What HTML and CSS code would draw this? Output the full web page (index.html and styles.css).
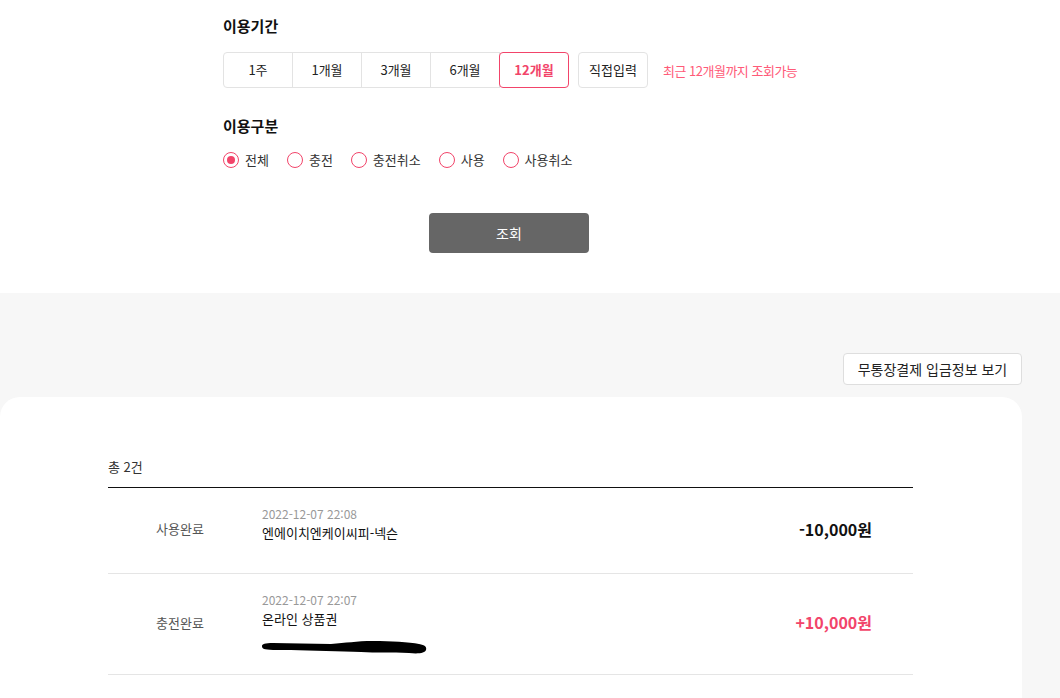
FILE: index.html
```html
<!DOCTYPE html>
<html lang="ko">
<head>
<meta charset="utf-8">
<title>이용내역</title>
<link rel="stylesheet" href="styles.css">
</head>
<body>
<section class="filter">
  <div class="filter-inner">
    <h3 class="label">이용기간</h3>
    <div class="period-row">
      <div class="seg">
        <button class="seg-btn">1주</button>
        <button class="seg-btn">1개월</button>
        <button class="seg-btn">3개월</button>
        <button class="seg-btn">6개월</button>
        <button class="seg-btn active">12개월</button>
      </div>
      <button class="seg-btn custom">직접입력</button>
      <span class="hint">최근 12개월까지 조회가능</span>
    </div>
    <h3 class="label label-2">이용구분</h3>
    <div class="radios">
      <label class="radio checked"><span class="circle"></span>전체</label>
      <label class="radio"><span class="circle"></span>충전</label>
      <label class="radio"><span class="circle"></span>충전취소</label>
      <label class="radio"><span class="circle"></span>사용</label>
      <label class="radio"><span class="circle"></span>사용취소</label>
    </div>
    <div class="search-wrap"><button class="search-btn">조회</button></div>
  </div>
</section>
<section class="results">
  <div class="results-top"><button class="deposit-btn">무통장결제 입금정보 보기</button></div>
  <div class="card">
    <p class="total">총 2건</p>
    <ul class="list">
      <li class="row">
        <div class="status">사용완료</div>
        <div class="info">
          <div class="date">2022-12-07 22:08</div>
          <div class="title">엔에이치엔케이씨피-넥슨</div>
        </div>
        <div class="amount">-10,000원</div>
      </li>
      <li class="row row-2">
        <div class="status">충전완료</div>
        <div class="info">
          <div class="date">2022-12-07 22:07</div>
          <div class="title">온라인 상품권</div>
          <svg class="redact" width="166" height="13" viewBox="0 0 166 13"><path d="M1 5 C1 3 4 2 12 2 C30 2 50 3 70 3 C85 2 95 0 112 0 C130 0 148 1 158 3 C164 4 166 6 165 9 C164 12 158 13 148 12 C130 11 115 12 100 11 C80 10 50 10 30 9 C15 9 6 9 3 8 C1 7 1 6 1 5 Z" fill="#000"/></svg>
        </div>
        <div class="amount plus">+10,000원</div>
      </li>
    </ul>
  </div>
</section>
</body>
</html>
```
FILE: styles.css
```css
* { box-sizing: border-box; }
html, body { margin: 0; padding: 0; }
body {
  font-family: "Noto Sans CJK KR", "Noto Sans", sans-serif;
  background: #f7f7f7;
  color: #111;
  width: 1060px;
  height: 698px;
  overflow: hidden;
}
button { font-family: inherit; cursor: pointer; }

.filter { background: #fff; padding: 15px 0 40px; }
.filter-inner { margin-left: 223px; width: 600px; }
.label { margin: 0; font-size: 15px; line-height: 22px; font-weight: 700; color: #111; }
.label-2 { margin-top: 27px; }

.period-row { display: flex; align-items: center; margin-top: 15px; }
.seg { display: flex; flex-shrink: 0; }
.seg-btn {
  width: 70px; height: 36px; margin: 0 0 0 -1px; padding: 0;
  background: #fff; border: 1px solid #e3e3e3; color: #222;
  font-size: 13px; line-height: 20px; position: relative; flex-shrink: 0;
}
.seg .seg-btn:first-child { margin-left: 0; border-radius: 4px 0 0 4px; }
.seg-btn.active { border-color: #f2446a; color: #f2446a; font-weight: 700; border-radius: 4px; z-index: 1; }
.seg-btn.custom { margin-left: 9px; border-radius: 4px; }
.hint { margin-left: 15px; font-size: 13px; color: #ff5a78; white-space: nowrap; letter-spacing: -0.5px; }

.radios { display: flex; margin-top: 13px; height: 20px; align-items: center; }
.radio { display: flex; align-items: center; font-size: 13px; line-height: 20px; color: #333; margin-right: 18px; }
.circle {
  width: 16px; height: 16px; border: 1px solid #f2446a; border-radius: 50%;
  margin-right: 6px; display: flex; align-items: center; justify-content: center;
}
.radio.checked .circle::after { content: ""; width: 8px; height: 8px; border-radius: 50%; background: #f2446a; }

.search-wrap { margin-top: 43px; padding-left: 206px; }
.search-btn {
  display: block;
  width: 160px; height: 40px; border: 0; border-radius: 4px;
  background: #666; color: #fff; font-size: 14px;
}

.results { padding: 60px 38px 0 0; }
.results-top { display: flex; justify-content: flex-end; }
.deposit-btn {
  display: block;
  height: 32px; width: 179px; background: #fff; border: 1px solid #dedede;
  border-radius: 4px; font-size: 14px; line-height: 20px; color: #222; padding: 0;
}
.card {
  margin-top: 12px; background: #fff; border-radius: 20px;
  padding: 60px 109px 40px 108px; height: 400px;
}
.total { margin: 0; font-size: 13px; line-height: 20px; color: #333; }
.list { list-style: none; margin: 10px 0 0; padding: 0; border-top: 1px solid #111; }
.row {
  display: flex; align-items: center; padding-right: 41px; min-height: 86px;
  border-bottom: 1px solid #e5e5e5;
}
.row-2 { min-height: 101px; }
.status { width: 144px; text-align: center; font-size: 13px; line-height: 20px; color: #555; margin-bottom: 3px; }
.info { margin-left: 10px; flex: 1; align-self: flex-start; padding-top: 17px; }
.date { font-size: 12px; line-height: 18px; color: #999; }
.title { font-size: 13px; line-height: 20px; color: #111; }
.redact { display: block; margin-top: 12px; margin-left: -1px; }
.amount { font-size: 16px; line-height: 22px; font-weight: 700; color: #111; margin-bottom: 4px; }
.amount.plus { color: #f2446a; }
```
